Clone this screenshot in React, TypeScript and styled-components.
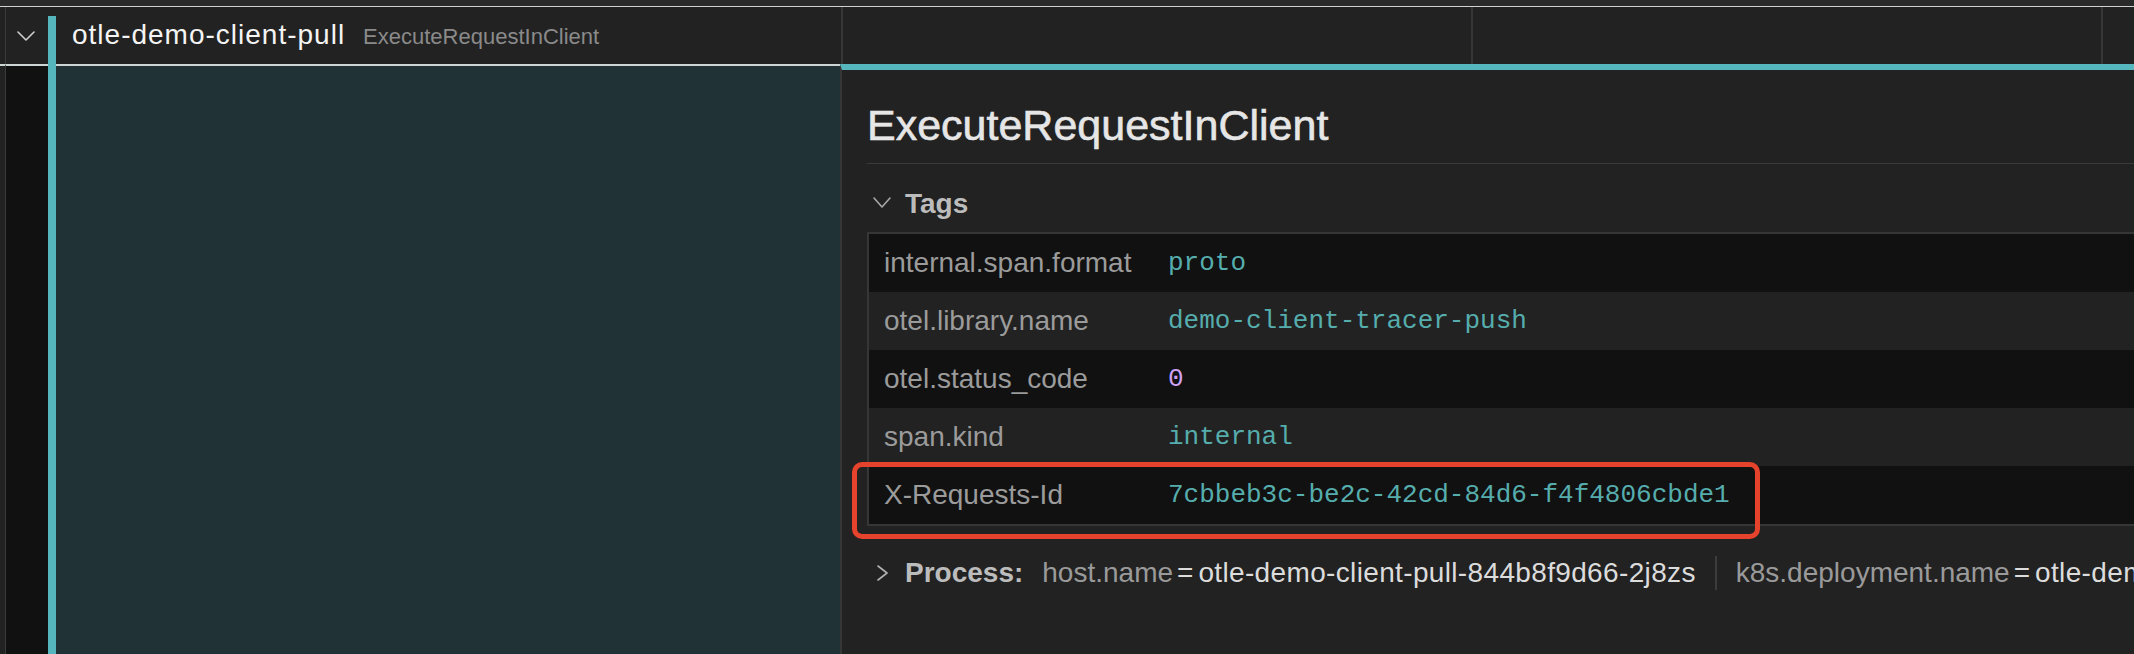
import React from "react";
import styled, { createGlobalStyle } from "styled-components";

const TEAL = "#56b6be";

const GlobalStyle = createGlobalStyle`
  html, body { margin: 0; padding: 0; background: #222222; }
  body { font-family: "Liberation Sans", Arial, sans-serif; }
  * { box-sizing: border-box; }
`;

const Page = styled.div`
  width: 2134px;
  height: 654px;
  overflow: hidden;
  display: flex;
  flex-direction: column;
  background: #222222;
`;

const PrevRow = styled.div`
  flex: none;
  height: 7px;
  background: #2a2a2a;
  border-bottom: 1px solid #d0d0d0;
`;

const SpanHeader = styled.div`
  flex: none;
  height: 57px;
  display: flex;
  background: #222222;
`;

const GutterEdge = styled.div<{ $line?: boolean }>`
  flex: none;
  width: 5px;
  border-top: ${(p) => (p.$line ? "2px solid #cdd5d5" : "none")};
`;

const GutterBody = styled.div<{ $dark?: boolean }>`
  flex: none;
  width: 43px;
  display: flex;
  align-items: center;
  justify-content: center;
  padding-right: 3px;
  border-left: 1px solid #3a3a3a;
  background: ${(p) => (p.$dark ? "#111111" : "transparent")};
  border-top: ${(p) => (p.$dark ? "2px solid #cdd5d5" : "none")};
`;

const NameCell = styled.div`
  flex: none;
  width: 793px;
  height: 48px;
  align-self: flex-end;
  border-left: 8px solid ${TEAL};
  padding: 3px 0 0 16px;
  display: flex;
  align-items: baseline;
  gap: 18px;
  white-space: nowrap;
`;

const ServiceName = styled.span`
  font-size: 28px;
  line-height: 32px;
  color: #f4f4f4;
  letter-spacing: 1px;
`;

const OperationName = styled.span`
  font-size: 22px;
  line-height: 26px;
  color: #8a8a8a;
`;

const TickCell = styled.div<{ $grow?: boolean }>`
  flex: ${(p) => (p.$grow ? "1" : "none")};
  width: ${(p) => (p.$grow ? "auto" : "630px")};
  border-left: 2px solid #363636;
`;

const DetailRow = styled.div`
  flex: 1;
  display: flex;
  min-height: 0;
`;

const AccentBar = styled.div`
  flex: none;
  width: 8px;
  background: ${TEAL};
`;

const LeftFill = styled.div`
  flex: none;
  width: 784px;
  background: #203236;
  border-top: 2px solid #cdd5d5;
`;

const Panel = styled.div`
  flex: 1;
  position: relative;
  overflow: hidden;
  background: #222222;
  border-left: 2px solid #363636;
  border-top: 6px solid ${TEAL};
  padding-left: 25px;
`;

const Title = styled.h1`
  margin: 30px 0 13px;
  font-size: 43px;
  line-height: 50px;
  font-weight: 400;
  color: #e6e6e6;
  -webkit-text-stroke: 0.6px #e6e6e6;
  white-space: nowrap;
`;

const Divider = styled.div`
  height: 1px;
  background: #3a3a3a;
`;

const SectionHeader = styled.div<{ $top: number }>`
  margin-top: ${(p) => p.$top}px;
  height: 32px;
  display: flex;
  align-items: center;
  white-space: nowrap;
  font-size: 28px;
  line-height: 32px;
`;

const IconBox = styled.span<{ $lift?: number }>`
  flex: none;
  width: 24px;
  margin: 0 11px ${(p) => p.$lift ?? 0}px 3px;
  display: flex;
  justify-content: center;
  align-items: center;
`;

const SectionLabel = styled.span`
  font-weight: 700;
  color: #bcbcbc;
  margin-right: 19px;
`;

const TagTable = styled.div`
  margin-top: 12px;
  width: calc(100% + 40px);
  border: 2px solid #363636;
`;

const TagRow = styled.div<{ $odd: boolean }>`
  position: relative;
  height: 58px;
  display: grid;
  grid-template-columns: 299px 1fr;
  align-items: center;
  background: ${(p) => (p.$odd ? "#111111" : "#222222")};
`;

const TagKey = styled.span`
  padding-left: 15px;
  font-size: 28px;
  line-height: 32px;
  color: #9b9b9b;
  white-space: nowrap;
`;

const TagValue = styled.span<{ $num?: boolean }>`
  font-family: "Liberation Mono", "Courier New", monospace;
  font-size: 26px;
  line-height: 32px;
  color: ${(p) => (p.$num ? "#cfa2f5" : "#56adad")};
  white-space: nowrap;
`;

const Highlight = styled.div`
  position: absolute;
  left: -17px;
  top: -4px;
  width: 908px;
  height: 77px;
  border: 5px solid #e5432b;
  border-radius: 10px;
  pointer-events: none;
`;

const KVKey = styled.span`
  color: #9a9a9a;
`;

const KVEq = styled.span`
  color: #dcdcdc;
  margin: 0 5px 0 4px;
`;

const KVVal = styled.span`
  color: #dcdcdc;
  letter-spacing: 0.35px;
`;

const KVSep = styled.span`
  flex: none;
  width: 2px;
  height: 34px;
  background: #3c3c3c;
  margin: 0 19px;
`;

const ChevronDown = ({ w, h, color }: { w: number; h: number; color: string }) => (
  <svg width={w} height={h} viewBox={`0 0 ${w} ${h}`} fill="none">
    <polyline
      points={`1,1 ${w / 2},${h - 1} ${w - 1},1`}
      stroke={color}
      strokeWidth={1.6}
      strokeLinecap="round"
      strokeLinejoin="round"
    />
  </svg>
);

const ChevronRight = ({ w, h, color }: { w: number; h: number; color: string }) => (
  <svg width={w} height={h} viewBox={`0 0 ${w} ${h}`} fill="none">
    <polyline
      points={`1,1 ${w - 1},${h / 2} 1,${h - 1}`}
      stroke={color}
      strokeWidth={1.6}
      strokeLinecap="round"
      strokeLinejoin="round"
    />
  </svg>
);

const tags: { key: string; value: string; num?: boolean }[] = [
  { key: "internal.span.format", value: "proto" },
  { key: "otel.library.name", value: "demo-client-tracer-push" },
  { key: "otel.status_code", value: "0", num: true },
  { key: "span.kind", value: "internal" },
  { key: "X-Requests-Id", value: "7cbbeb3c-be2c-42cd-84d6-f4f4806cbde1" },
];

const processTags = [
  { key: "host.name", value: "otle-demo-client-pull-844b8f9d66-2j8zs" },
  { key: "k8s.deployment.name", value: "otle-demo-client-pull" },
];

export default function App() {
  return (
    <>
      <GlobalStyle />
      <Page>
        <PrevRow />
        <SpanHeader>
          <GutterEdge />
          <GutterBody>
            <ChevronDown w={18} h={10} color="#cfcfcf" />
          </GutterBody>
          <NameCell>
            <ServiceName>otle-demo-client-pull</ServiceName>
            <OperationName>ExecuteRequestInClient</OperationName>
          </NameCell>
          <TickCell />
          <TickCell />
          <TickCell $grow />
        </SpanHeader>
        <DetailRow>
          <GutterEdge $line />
          <GutterBody $dark />
          <AccentBar />
          <LeftFill />
          <Panel>
            <Title>ExecuteRequestInClient</Title>
            <Divider />
            <SectionHeader $top={24}>
              <IconBox $lift={4}>
                <ChevronDown w={18} h={11} color="#a8a8a8" />
              </IconBox>
              <SectionLabel>Tags</SectionLabel>
            </SectionHeader>
            <TagTable>
              {tags.map((t, i) => (
                <TagRow key={t.key} $odd={i % 2 === 0}>
                  <TagKey>{t.key}</TagKey>
                  <TagValue $num={t.num}>{t.value}</TagValue>
                  {t.key === "X-Requests-Id" && <Highlight />}
                </TagRow>
              ))}
            </TagTable>
            <SectionHeader $top={31}>
              <IconBox>
                <ChevronRight w={11} h={16} color="#b0b0b0" />
              </IconBox>
              <SectionLabel>Process:</SectionLabel>
              {processTags.map((p, i) => (
                <React.Fragment key={p.key}>
                  {i > 0 && <KVSep />}
                  <KVKey>{p.key}</KVKey>
                  <KVEq>=</KVEq>
                  <KVVal>{p.value}</KVVal>
                </React.Fragment>
              ))}
            </SectionHeader>
          </Panel>
        </DetailRow>
      </Page>
    </>
  );
}
